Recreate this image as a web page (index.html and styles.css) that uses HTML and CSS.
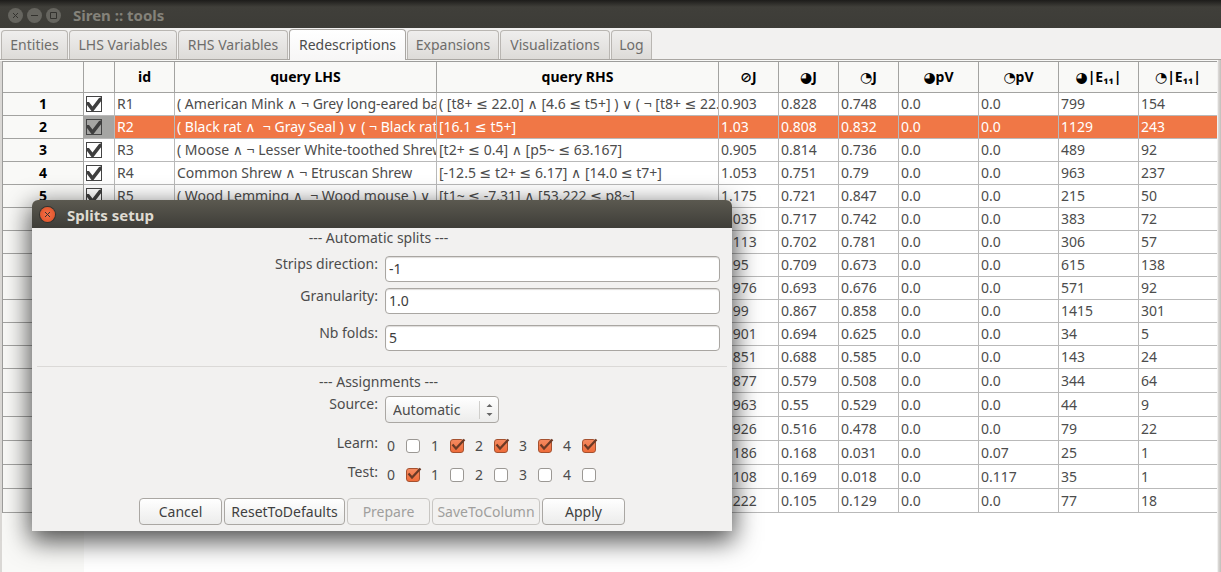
FILE: index.html
```html
<!DOCTYPE html>
<html lang="en">
<head>
<meta charset="utf-8">
<title>Siren :: tools</title>
<link rel="stylesheet" href="styles.css">
</head>
<body>
<svg class="defs" aria-hidden="true">
  <symbol id="tick" viewBox="0 0 16 16"><path d="M1 6 L3 6 L6.500 10.500 L13 2 L16 1 V4 L7.500 15 H5.500 L1 9 Z"/></symbol>
  <symbol id="mark" viewBox="0 0 18 16"><path d="M4.500 7.500 L8 11.500 L16.500 2.500" fill="none" stroke="#6b3a26" stroke-width="2.200"/></symbol>
</svg>
<div class="window">
  <header class="titlebar">
    <div class="controls">
      <button class="ctl" aria-label="Close"><svg viewBox="0 0 15 15"><path d="M5 5L10 10M10 5L5 10"/></svg></button>
      <button class="ctl" aria-label="Minimize"><svg viewBox="0 0 15 15"><path d="M4 7.500H11"/></svg></button>
      <button class="ctl" aria-label="Maximize"><svg viewBox="0 0 15 15"><path d="M4.500 4.500H10.500V10.500H4.500Z"/></svg></button>
    </div>
    <h1 class="title">Siren :: tools</h1>
  </header>
  <nav class="tabs" role="tablist">
    <button class="tab t-entities" role="tab">Entities</button>
    <button class="tab t-lhs" role="tab">LHS Variables</button>
    <button class="tab t-rhs" role="tab">RHS Variables</button>
    <button class="tab t-red active" role="tab" aria-selected="true">Redescriptions</button>
    <button class="tab t-exp" role="tab">Expansions</button>
    <button class="tab t-vis" role="tab">Visualizations</button>
    <button class="tab t-log" role="tab">Log</button>
  </nav>
  <main class="pane">
    <div class="sheet">
    <table class="grid">
      <colgroup><col class="c-num"><col class="c-chk"><col class="c-id"><col class="c-lhs"><col class="c-rhs"><col class="c-j"><col class="c-j"><col class="c-j"><col class="c-p"><col class="c-p"><col class="c-p"><col class="c-last"></colgroup>
      <thead><tr><th></th><th></th><th>id</th><th>query LHS</th><th>query RHS</th><th>⊘J</th><th>◕J</th><th>◔J</th><th>◕pV</th><th>◔pV</th><th>◕|E₁₁|</th><th>◔|E₁₁|</th></tr></thead>
      <tbody>
        <tr><th>1</th><td class="chk"><label class="tickbox"><input type="checkbox" checked aria-label="R1"><svg><use href="#tick"/></svg></label></td><td>R1</td><td>( American Mink ∧ ¬ Grey long-eared bat )</td><td>( [t8+ ≤ 22.0] ∧ [4.6 ≤ t5+] ) ∨ ( ¬ [t8+ ≤ 22.0]</td><td>0.903</td><td>0.828</td><td>0.748</td><td>0.0</td><td>0.0</td><td>799</td><td>154</td></tr>
        <tr class="selected"><th>2</th><td class="chk"><label class="tickbox"><input type="checkbox" checked aria-label="R2"><svg><use href="#tick"/></svg></label></td><td>R2</td><td>( Black rat ∧&nbsp; ¬ Gray Seal ) ∨ ( ¬ Black rat</td><td>[16.1 ≤ t5+]</td><td>1.03</td><td>0.808</td><td>0.832</td><td>0.0</td><td>0.0</td><td>1129</td><td>243</td></tr>
        <tr><th>3</th><td class="chk"><label class="tickbox"><input type="checkbox" checked aria-label="R3"><svg><use href="#tick"/></svg></label></td><td>R3</td><td>( Moose ∧ ¬ Lesser White-toothed Shrew )</td><td>[t2+ ≤ 0.4] ∧ [p5~ ≤ 63.167]</td><td>0.905</td><td>0.814</td><td>0.736</td><td>0.0</td><td>0.0</td><td>489</td><td>92</td></tr>
        <tr><th>4</th><td class="chk"><label class="tickbox"><input type="checkbox" checked aria-label="R4"><svg><use href="#tick"/></svg></label></td><td>R4</td><td>Common Shrew ∧ ¬ Etruscan Shrew</td><td>[-12.5 ≤ t2+ ≤ 6.17] ∧ [14.0 ≤ t7+]</td><td>1.053</td><td>0.751</td><td>0.79</td><td>0.0</td><td>0.0</td><td>963</td><td>237</td></tr>
        <tr><th>5</th><td class="chk"><label class="tickbox"><input type="checkbox" checked aria-label="R5"><svg><use href="#tick"/></svg></label></td><td>R5</td><td>( Wood Lemming ∧&nbsp; ¬ Wood mouse ) ∨</td><td>[t1~ ≤ -7.31] ∧ [53.222 ≤ p8~]</td><td>1.175</td><td>0.721</td><td>0.847</td><td>0.0</td><td>0.0</td><td>215</td><td>50</td></tr>
        <tr><th></th><td></td><td></td><td></td><td></td><td>1.035</td><td>0.717</td><td>0.742</td><td>0.0</td><td>0.0</td><td>383</td><td>72</td></tr>
        <tr><th></th><td></td><td></td><td></td><td></td><td>1.113</td><td>0.702</td><td>0.781</td><td>0.0</td><td>0.0</td><td>306</td><td>57</td></tr>
        <tr><th></th><td></td><td></td><td></td><td></td><td>0.95</td><td>0.709</td><td>0.673</td><td>0.0</td><td>0.0</td><td>615</td><td>138</td></tr>
        <tr><th></th><td></td><td></td><td></td><td></td><td>0.976</td><td>0.693</td><td>0.676</td><td>0.0</td><td>0.0</td><td>571</td><td>92</td></tr>
        <tr><th></th><td></td><td></td><td></td><td></td><td>0.99</td><td>0.867</td><td>0.858</td><td>0.0</td><td>0.0</td><td>1415</td><td>301</td></tr>
        <tr><th></th><td></td><td></td><td></td><td></td><td>0.901</td><td>0.694</td><td>0.625</td><td>0.0</td><td>0.0</td><td>34</td><td>5</td></tr>
        <tr><th></th><td></td><td></td><td></td><td></td><td>0.851</td><td>0.688</td><td>0.585</td><td>0.0</td><td>0.0</td><td>143</td><td>24</td></tr>
        <tr class="tall"><th></th><td></td><td></td><td></td><td></td><td>0.877</td><td>0.579</td><td>0.508</td><td>0.0</td><td>0.0</td><td>344</td><td>64</td></tr>
        <tr class="tall"><th></th><td></td><td></td><td></td><td></td><td>0.963</td><td>0.55</td><td>0.529</td><td>0.0</td><td>0.0</td><td>44</td><td>9</td></tr>
        <tr class="tall"><th></th><td></td><td></td><td></td><td></td><td>0.926</td><td>0.516</td><td>0.478</td><td>0.0</td><td>0.0</td><td>79</td><td>22</td></tr>
        <tr class="tall"><th></th><td></td><td></td><td></td><td></td><td>0.186</td><td>0.168</td><td>0.031</td><td>0.0</td><td>0.07</td><td>25</td><td>1</td></tr>
        <tr class="tall"><th></th><td></td><td></td><td></td><td></td><td>0.108</td><td>0.169</td><td>0.018</td><td>0.0</td><td>0.117</td><td>35</td><td>1</td></tr>
        <tr class="tall"><th></th><td></td><td></td><td></td><td></td><td>1.222</td><td>0.105</td><td>0.129</td><td>0.0</td><td>0.0</td><td>77</td><td>18</td></tr>
      </tbody>
    </table>
    <div class="gutter"></div>
    </div>
  </main>
</div>

<section class="dialog" role="dialog" aria-labelledby="dlg-title">
  <header class="dlg-bar">
    <button class="ctl close" aria-label="Close dialog"><svg viewBox="0 0 15 15"><path d="M5 5L10 10M10 5L5 10"/></svg></button>
    <h2 class="title" id="dlg-title">Splits setup</h2>
  </header>
  <form class="form">
    <h3 class="group">--- Automatic splits ---</h3>
    <div class="row first"><label for="strips">Strips direction:</label><input class="text" id="strips" type="text" value="-1"></div>
    <div class="row"><label for="gran">Granularity:</label><input class="text" id="gran" type="text" value="1.0"></div>
    <div class="row folds"><label for="folds">Nb folds:</label><input class="text" id="folds" type="text" value="5"></div>
    <hr class="rule">
    <h3 class="group">--- Assignments ---</h3>
    <div class="row source"><label for="source">Source:</label>
      <div class="combo"><select id="source"><option>Automatic</option></select><svg viewBox="0 0 20 20"><path d="M.500 1V19" stroke="#cfcecb"/><path d="M7.500 7L10.500 4L13.500 7ZM7.500 13L10.500 16L13.500 13Z" fill="#666"/></svg></div></div>
    <div class="row checks"><span>Learn:</span>
      <div class="set">
        <label>0<span class="cb"><input type="checkbox"><svg><use href="#mark"/></svg></span></label>
        <label>1<span class="cb"><input type="checkbox" checked><svg><use href="#mark"/></svg></span></label>
        <label>2<span class="cb"><input type="checkbox" checked><svg><use href="#mark"/></svg></span></label>
        <label>3<span class="cb"><input type="checkbox" checked><svg><use href="#mark"/></svg></span></label>
        <label>4<span class="cb"><input type="checkbox" checked><svg><use href="#mark"/></svg></span></label>
      </div></div>
    <div class="row checks"><span>Test:</span>
      <div class="set">
        <label>0<span class="cb"><input type="checkbox" checked><svg><use href="#mark"/></svg></span></label>
        <label>1<span class="cb"><input type="checkbox"><svg><use href="#mark"/></svg></span></label>
        <label>2<span class="cb"><input type="checkbox"><svg><use href="#mark"/></svg></span></label>
        <label>3<span class="cb"><input type="checkbox"><svg><use href="#mark"/></svg></span></label>
        <label>4<span class="cb"><input type="checkbox"><svg><use href="#mark"/></svg></span></label>
      </div></div>
    <div class="actions">
      <button class="btn" type="button">Cancel</button>
      <button class="btn wide" type="button">ResetToDefaults</button>
      <button class="btn" type="button" disabled>Prepare</button>
      <button class="btn mid" type="button" disabled>SaveToColumn</button>
      <button class="btn" type="button">Apply</button>
    </div>
  </form>
</section>
</body>
</html>
```
FILE: styles.css
```css
* { box-sizing: border-box; }
body, button, input, select {
  font-family: "Noto Sans", "DejaVu Sans", sans-serif;
  font-size: 14px;
  line-height: 20px;
  color: #4c4c4c;
}
body { margin: 0; background: #f2f1f0; overflow: hidden; }
button, input, select { margin: 0; }
.defs { display: none; }

.window { display: flex; flex-direction: column; min-height: 100vh; }
.titlebar, .dlg-bar { display: flex; align-items: center; height: 28px; }
.titlebar { padding: 2px 0 0 8px; gap: 12px; background: linear-gradient(#1d1c1a, #403f3a 7px, #3d3c37); }
.controls { display: flex; gap: 4px; }
.ctl {
  display: block; width: 15px; height: 15px; padding: 0;
  border: 0; border-radius: 50%; background: #66655f;
}
.ctl svg { display: block; fill: none; stroke: #33322e; stroke-width: 1; }
.title { margin: 0; font-size: 15px; font-weight: 700; color: #84827a; }

.tabs { display: flex; align-items: flex-end; height: 32px; padding-left: 1px; gap: 1px; border-bottom: 1px solid #a9a6a2; }
.tab {
  height: 29px; padding: 0; white-space: nowrap; color: #6e6d6b;
  border: 1px solid #b9b6b2; border-bottom: 0; border-radius: 4px 4px 0 0;
  background: linear-gradient(#efeeed, #dddbd8);
}
.tab.active { height: 31px; margin-bottom: -1px; background: linear-gradient(#fff, #f7f6f6); color: #4c4c4c; border-color: #a9a6a2; }
.t-entities { width: 67px; }
.t-lhs { width: 108px; }
.t-rhs { width: 110px; }
.t-red { width: 117px; }
.t-exp { width: 92px; }
.t-vis { width: 110px; }
.t-log { width: 41px; }

.pane { flex: 1; display: flex; padding: 1px 3px 0 0; background: linear-gradient(90deg, #dedcda, #c1beb9) right / 3px 100% no-repeat #f9f9f7; }
.sheet { flex: 1; min-width: 0; display: flex; flex-direction: column; border-left: 2px solid #dad8d5; border-right: 1px solid #f2f1f0; background: #fff; }
.gutter { flex: 1; width: 82px; background: #f9f9f7; }
.grid { width: 100%; table-layout: fixed; border-spacing: 0; border-left: 1px solid #9d9d9b; border-top: 1px solid #9d9d9b; }
.c-num { width: 81px; }
.c-chk { width: 31px; }
.c-id, .c-j { width: 60px; }
.c-lhs { width: 262px; }
.c-p { width: 80px; }
.c-last { width: 78px; }
.grid th, .grid td {
  height: 23px; padding: 0 0 0 2px; line-height: 20px;
  white-space: nowrap; overflow: hidden; text-align: left;
  border-right: 1px solid #b9b9b9; border-bottom: 1px solid #b9b9b9;
}
.grid th { padding: 0; text-align: center; color: #000; background: #f9f9f7; border-color: #a3a3a1; }
.grid thead th { height: 31px; }
.grid tr > :last-child { border-right: 0; }
.grid .tall > * { height: 24px; }
.grid .selected td { background: #f07746; color: #fff; }
.grid .selected td.chk { background: #a5a5a3; }
.tickbox { display: grid; width: 16px; height: 16px; }
.tickbox > * { grid-area: 1 / 1; width: 16px; height: 16px; }
.tickbox input { appearance: none; border: 1px solid #444; }
.tickbox svg { fill: #3f3f3f; pointer-events: none; }

.dialog {
  position: absolute; left: 32px; top: 200px; width: 700px;
  border-radius: 6px 6px 0 0; background: #f2f1f0;
  box-shadow: 0 8px 26px 2px rgba(0, 0, 0, .7);
}
.dlg-bar { padding: 1px 0 0 8px; gap: 12px; border-radius: 6px 6px 0 0; background: linear-gradient(#5b5950, #3e3d38); }
.dlg-bar .title { color: #dfdbd2; }
.close { background: radial-gradient(#f4714a, #dd4d22); box-shadow: 0 0 0 1px #33322e; }
.form { padding: 0 12px 6px 5px; }
.group { margin: 0; text-align: center; font-size: 14px; font-weight: 400; }
.row { display: grid; grid-template-columns: 341px 1fr; column-gap: 7px; align-items: start; height: 32px; }
.row > :first-child { text-align: right; }
.row.first { margin-top: 6px; }
.row.folds { margin-top: 5px; height: 28px; }
.text {
  width: 100%; height: 26px; margin-top: 2px; padding: 0 3px 2px; color: #3c3c3c;
  border: 1px solid #a9a6a2; border-radius: 4px; background: #fff;
  box-shadow: inset 0 1px 1px #dedcda;
}
.rule { margin: 15px -7px 5px 0; border: 0; border-top: 1px solid #dbd9d7; }
.source { margin-top: 2px; height: 39px; }
.combo { display: grid; width: 114px; margin-top: 2px; }
.combo > * { grid-area: 1 / 1; }
.combo select {
  appearance: none; height: 27px; padding: 0 7px; border: 1px solid #aaa7a3;
  border-radius: 4px; background: linear-gradient(#fff, #ececeb);
}
.combo svg { width: 20px; height: 20px; justify-self: end; align-self: center; fill: none; pointer-events: none; }
.row.checks { height: 29px; }
.set { display: flex; padding: 3px 0 0 2px; }
.set label { display: flex; align-items: center; gap: 11px; width: 44px; }
.cb { display: grid; width: 14px; height: 14px; }
.cb > * { grid-area: 1 / 1; }
.cb input { appearance: none; width: 14px; height: 14px; border: 1px solid #9b9894; border-radius: 3px; background: #fff; }
.cb svg { display: none; width: 18px; height: 16px; margin: -2px 0 0 -2px; pointer-events: none; }
.cb input:checked { background: linear-gradient(#f58a60, #ef6c3a); border-color: #a5512f; }
.cb input:checked + svg { display: block; }
.actions { display: flex; justify-content: center; gap: 2px; margin-top: 7px; padding-left: 7px; }
.btn {
  width: 83px; height: 27px; padding: 0; border: 1px solid #aaa7a3; border-radius: 4px;
  background: linear-gradient(#fff, #ececeb); color: #3f3f3f;
}
.btn.wide { width: 121px; }
.btn.mid { width: 108px; }
.btn:disabled { color: #a09f9d; border-color: #c8c6c3; background: #f2f1f0; }
```
